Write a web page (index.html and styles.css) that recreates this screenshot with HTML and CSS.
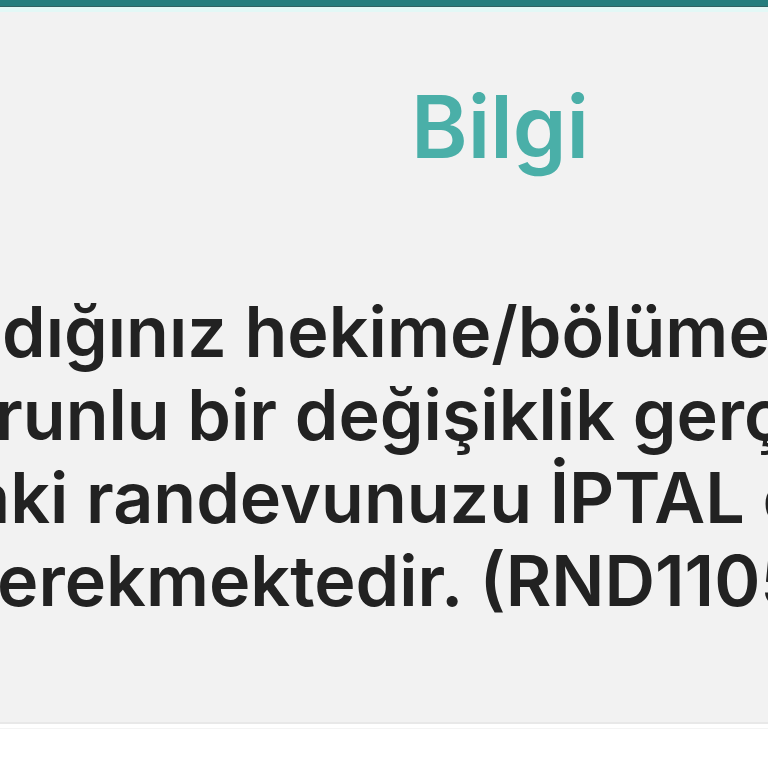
FILE: index.html
```html
<!DOCTYPE html>
<html lang="tr">
<head>
<meta charset="utf-8">
<link rel="stylesheet" href="styles.css">
</head>
<body>
<div class="page">
  <div class="topbar"></div>
  <div class="tint"></div>
  <div class="modal">
    <h1 class="title">Bilgi</h1>
    <div class="message">
      <div class="line l1">dığınız hekime/bölümede</div>
      <div class="line l2">runlu bir değişiklik gerçekleşmiştir</div>
      <div class="line l3">aki randevunuzu İPTAL etmeniz</div>
      <div class="line l4">erekmektedir. (RND1105)</div>
    </div>
  </div>
  <div class="footer"></div>
</div>
</body>
</html>
```
FILE: styles.css
```css
html, body {
  margin: 0;
  padding: 0;
  background: #ffffff;
}
.page {
  width: 768px;
  height: 768px;
  overflow: hidden;
  display: flex;
  flex-direction: column;
  font-family: "Inter", "Liberation Sans", sans-serif;
}
.topbar {
  height: 6px;
  background: #237d7d;
  border-bottom: 1px solid #2e6262;
}
.tint {
  height: 5px;
  background: #e2f8f6;
}
.modal {
  height: 710px;
  background: #f2f2f2;
  border-bottom: 2px solid #e8e8e8;
  overflow: hidden;
}
.title {
  margin: 0;
  padding-top: 65px;
  padding-left: 232px;
  text-align: center;
  font-size: 86px;
  font-weight: 600;
  line-height: 100px;
  color: #4aafa8;
}
.message {
  margin-top: 113px;
  color: #222222;
  font-size: 70px;
  font-weight: 600;
  line-height: 83px;
  letter-spacing: 0;
}
.line {
  white-space: nowrap;
}
.l1 { text-indent: 2px; }
.l2 { text-indent: -5px; }
.l3 { text-indent: -30px; }
.l4 { text-indent: -3px; }
.footer {
  flex: 1;
  border-top: 1px solid #f4f4f4;
  margin-top: 4px;
}
```
